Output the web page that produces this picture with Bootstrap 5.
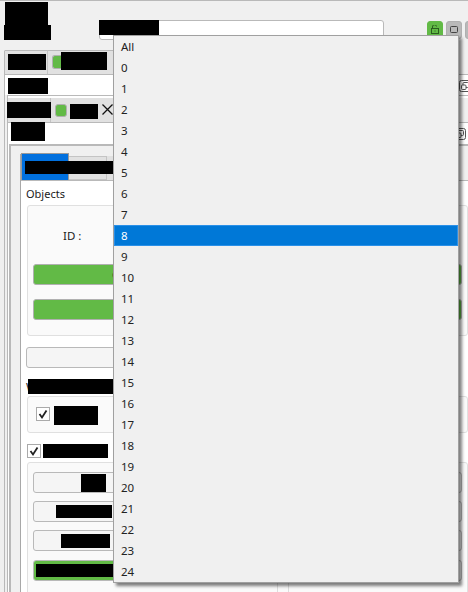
<!DOCTYPE html>
<html lang="en">
<head>
<meta charset="utf-8">
<title>Objects</title>
<link href="https://cdn.jsdelivr.net/npm/bootstrap@5.3.0/dist/css/bootstrap.min.css" rel="stylesheet">
<style>
html,body{margin:0;height:592px;overflow:hidden}
body{position:relative;background:#f0f0f0;font-family:"Noto Sans","Open Sans",sans-serif;font-size:11.5px;color:#1a1a1a;border-top:1px solid #b9b9b9}
.hd{height:49px}
.rd{display:block;background:#000;flex:none}
.title-col{width:47px;margin-left:4px;padding-top:1px}
.t1{width:43px;height:23px;margin-left:1px}
.t2{width:47px;height:15px}
.search{width:285px;height:20px;margin:19px 0 0 48px;background:#fff;border:1px solid #b9b9b9;border-radius:3px;flex:none}
.s1{width:60px;height:15px;margin:-1px 0 0 -1px}
.tool{width:16px;height:18px;margin-top:20px;border-radius:3px;background:#b9b9b9;border:1px solid #b0b0b0;flex:none;display:flex;justify-content:center;padding-top:3px}
.tool.on{background:#62ba46;border-color:#62ba46;margin-left:43px}
.tool+.tool{margin-left:3px}
.tool svg{display:block}
.outer{margin-left:4px;border-top:1px solid transparent;border-left:1px solid #b9b9b9;height:600px}
.tabrow{display:flex;background:#f0f0f0;border-bottom:1px solid #b9b9b9}
.r1{height:24px}
.r1 .tabcell,.r1 .tabrest{margin-top:-1px;border-top:1px solid #b9b9b9}
.tabcell{width:43px;background:#e1e1e1;border-right:1px solid #c4c4c4;flex:none}
.tabrest{width:130px;background:#e1e1e1;display:flex;align-items:flex-start;flex:none}
.a1{width:38px;height:16px;margin:3px 0 0 3px}
.sq1{width:9px;height:14px;margin:4px 0 0 4px;background:#62ba46;border:1px solid #b0b0b0;border-right:0;border-radius:3px 0 0 3px;flex:none}
.a2{width:46px;height:18px;margin-top:1px}
.row-w{display:flex;background:#fff;height:20px}
.a3{width:40px;height:16px;margin:3px 0 0 3px}
.flo{width:12px;height:12px;margin-left:auto;flex:none}
.f1{margin-top:5px;margin-right:-3px}
.inner{margin-left:2px;border-top:1px solid #b9b9b9;border-left:1px solid #b9b9b9;background:#fff}
.gap2{height:2px}
.r2{height:25px}
.b1{width:45px;height:16px;margin:4px 0 0 -1px}
.sq2{width:12px;height:13px;margin:6px 0 0 4px;background:#62ba46;border:1px solid #b0b0b0;border-radius:3px;flex:none}
.b2{width:28px;height:15px;margin:6px 0 0 3px}
.xic{margin:6px 0 0 4px;flex:none}
.row-x{display:flex;background:#fff;height:21px}
.c1{width:34px;height:19px;margin:-1px 0 0 3px}
.f2{margin-top:5px;margin-right:2px}
.frame{margin-left:1px;border-top:2px solid #b9b9b9;border-left:2px solid #b9b9b9;padding:8px 0 0 9px;background:#f0f0f0}
.panel{border-left:1px solid #a8a8a8;background:#fff}
.tabs3{display:flex;height:27px;background:#f0f0f0;border-bottom:1px solid #b9b9b9;align-items:flex-end}
.blue{width:48px;height:27px;background:#0170de;border:1px solid #999;border-bottom:0;flex:none;position:relative;z-index:1}
.d1{width:89px;height:13px;margin:7px 0 0 3px}
.tab3b{width:38px;height:24px;background:#e1e1e1;border:1px solid #c4c4c4;border-left:0;flex:none}
.tab3c{width:60px;height:24px;background:#e1e1e1;border-right:1px solid #c4c4c4;flex:none}
.body3{background:#fff;padding-left:5px}
.lbl{height:24px;line-height:26px;font-size:11px}
.grp{margin-left:1px;background:#fafafa;border:1px solid #e0e0e0;border-radius:3px}
.ga{height:131px;padding:20px 0 0 5px}
.idl{height:20px;line-height:20px;margin-left:30px}
.gbtn{display:flex;align-items:center;width:429px;height:21px;padding:0;border-radius:3px;background:#62ba46;border:1px solid #b0b0b0;font:inherit;color:inherit}
.gbtn:hover{background:#62ba46;border-color:#b0b0b0}
.peek{margin-left:78px}
.mt18{margin-top:18px}
.mt14{margin-top:14px}
.plain{display:flex;align-items:center;width:429px;height:21px;padding:0;border-radius:3px;background:#f5f5f5;border:1px solid #b9b9b9}
.plain:hover{background:#f5f5f5;border-color:#b9b9b9}
.wide{width:420px;margin-top:11px}
.wrow{display:flex;height:15px;line-height:15px;margin:11px 0 2px}
.e1{width:85px;height:15px;margin-left:-9px}
.gb{height:37px;padding:9px 0 0 8px;display:flex}
.cb{width:14px;height:14px;background:#fff;border:1px solid #aaa;flex:none;display:block}
.cb svg{display:block}
.gb .cb{margin-top:1px}
.e2{width:44px;height:19px;margin-left:4px}
.rowc{display:flex;margin:11px 0 4px 1px}
.e3{width:65px;height:14px;margin-left:2px}
.gc{padding:9px 0 0 5px;height:140px}
.mt8{margin-top:8px}
.mt9{margin-top:9px}
.k1{width:25px;height:18px;margin-left:47px}
.k2{width:56px;height:13px;margin-left:22px}
.k3{width:49px;height:14px;margin-left:27px}
.gfill{display:flex;align-items:center;width:110px;height:19px;padding-left:2px;background:#62ba46;border-radius:2px 0 0 2px}
.k4{width:80px;height:13px}
.split{width:12px;height:14px;margin:2px 0 0 244px;border-left:1px solid #ddd;border-right:1px solid #ddd}
.dropdown-menu.pick{display:block;position:absolute;left:113px;top:34px;width:346px;min-width:0;height:548px;padding:0;margin:0;background:#f0f0f0;border:1px solid #a0a0a0;border-radius:0;box-shadow:3px 3px 3px rgba(0,0,0,.5);font-size:11.5px;z-index:5}
.pick .dropdown-item{height:21px;line-height:21px;padding:0 0 0 7px;color:#222;background:transparent}
.pick .dropdown-item.active{background:#0078d7;color:#fff;box-shadow:inset 0 0 0 1px #2a90e8}
</style>
</head>
<body>
<header class="hd d-flex align-items-start">
  <div class="title-col"><span class="rd t1"></span><span class="rd t2"></span></div>
  <div class="search"><span class="rd s1"></span></div>
  <div class="tool on"><svg width="8" height="9" viewBox="0 0 8 9" fill="none" stroke="#2a5c1f"><path d="M1.5 3.5V2a2 2 0 0 1 4-.5"/><rect x=".5" y="3.5" width="7" height="5"/><path d="M4 5.5v1"/></svg></div>
  <div class="tool"><svg width="8" height="8" viewBox="0 0 8 8" fill="none" stroke="#444"><rect x=".5" y="1.5" width="7" height="6" rx="1"/></svg></div>
  <div class="tool"></div>
</header>
<main class="outer">
  <div class="tabrow r1">
    <div class="tabcell"><span class="rd a1"></span></div>
    <div class="tabrest"><span class="sq1"></span><span class="rd a2"></span></div>
  </div>
  <div class="row-w">
    <span class="rd a3"></span>
    <svg class="flo f1" viewBox="0 0 12 12" fill="none" stroke="#555"><rect x=".5" y=".5" width="11" height="11" rx="2"/><rect x="4" y="2.5" width="5.5" height="5" rx="1"/><rect x="2.5" y="5" width="4.5" height="4.5" rx="1" fill="#fff"/></svg>
  </div>
  <div class="inner">
    <div class="gap2"></div>
    <div class="tabrow r2">
      <div class="tabcell"><span class="rd b1"></span></div>
      <div class="tabrest"><span class="sq2"></span><span class="rd b2"></span>
        <svg class="xic" width="11" height="11" viewBox="0 0 11 11" stroke="#111" stroke-width="1.3"><path d="M.5.5l10 10M10.5.5l-10 10"/></svg>
      </div>
    </div>
    <div class="row-x">
      <span class="rd c1"></span>
      <svg class="flo f2" viewBox="0 0 12 12" fill="none" stroke="#555"><rect x=".5" y=".5" width="11" height="11" rx="2"/><rect x="4" y="2.5" width="5.5" height="5" rx="1"/><rect x="2.5" y="5" width="4.5" height="4.5" rx="1" fill="#fff"/></svg>
    </div>
    <div class="frame">
      <div class="panel">
        <div class="tabs3">
          <div class="blue"><span class="rd d1"></span></div>
          <div class="tab3b"></div>
          <div class="tab3c"></div>
        </div>
        <div class="body3">
          <div class="lbl">Objects</div>
          <div class="grp ga">
            <div class="idl">ID :</div>
            <button type="button" class="btn gbtn mt18"><span class="peek">O</span></button>
            <button type="button" class="btn gbtn mt14"></button>
          </div>
          <button type="button" class="btn plain wide"></button>
          <div class="wrow"><span>W</span><span class="rd e1"></span></div>
          <div class="grp gb">
            <span class="cb"><svg width="12" height="12" viewBox="0 0 12 12" fill="none" stroke="#222" stroke-width="1.8"><path d="M2.5 6l2.5 3.5L9.5 2.5"/></svg></span>
            <span class="rd e2"></span>
          </div>
          <div class="rowc">
            <span class="cb"><svg width="12" height="12" viewBox="0 0 12 12" fill="none" stroke="#222" stroke-width="1.8"><path d="M2.5 6l2.5 3.5L9.5 2.5"/></svg></span>
            <span class="rd e3"></span>
          </div>
          <div class="grp gc">
            <button type="button" class="btn plain"><span class="rd k1"></span></button>
            <button type="button" class="btn plain mt8"><span class="rd k2"></span></button>
            <button type="button" class="btn plain mt8"><span class="rd k3"></span></button>
            <button type="button" class="btn plain mt9"><span class="gfill"><span class="rd k4"></span></span></button>
            <div class="split"></div>
          </div>
        </div>
      </div>
    </div>
  </div>
</main>
<ul class="dropdown-menu pick">
  <li><a class="dropdown-item" href="#">All</a></li>
  <li><a class="dropdown-item" href="#">0</a></li>
  <li><a class="dropdown-item" href="#">1</a></li>
  <li><a class="dropdown-item" href="#">2</a></li>
  <li><a class="dropdown-item" href="#">3</a></li>
  <li><a class="dropdown-item" href="#">4</a></li>
  <li><a class="dropdown-item" href="#">5</a></li>
  <li><a class="dropdown-item" href="#">6</a></li>
  <li><a class="dropdown-item" href="#">7</a></li>
  <li><a class="dropdown-item active" href="#">8</a></li>
  <li><a class="dropdown-item" href="#">9</a></li>
  <li><a class="dropdown-item" href="#">10</a></li>
  <li><a class="dropdown-item" href="#">11</a></li>
  <li><a class="dropdown-item" href="#">12</a></li>
  <li><a class="dropdown-item" href="#">13</a></li>
  <li><a class="dropdown-item" href="#">14</a></li>
  <li><a class="dropdown-item" href="#">15</a></li>
  <li><a class="dropdown-item" href="#">16</a></li>
  <li><a class="dropdown-item" href="#">17</a></li>
  <li><a class="dropdown-item" href="#">18</a></li>
  <li><a class="dropdown-item" href="#">19</a></li>
  <li><a class="dropdown-item" href="#">20</a></li>
  <li><a class="dropdown-item" href="#">21</a></li>
  <li><a class="dropdown-item" href="#">22</a></li>
  <li><a class="dropdown-item" href="#">23</a></li>
  <li><a class="dropdown-item" href="#">24</a></li>
</ul>
<script src="https://cdn.jsdelivr.net/npm/bootstrap@5.3.0/dist/js/bootstrap.bundle.min.js"></script>
</body>
</html>
